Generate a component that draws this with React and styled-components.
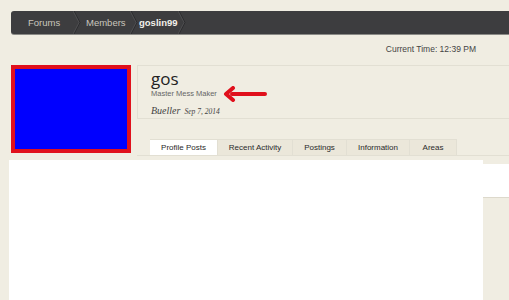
import * as React from "react";
import styled, { createGlobalStyle } from "styled-components";

const color = {
    page: "#f0ede2",
    bar: "#3d3d3f",
    crumb: "#c9c6bd",
    line: "#e2dfd3",
    tab: "#ebe7da",
    red: "#e0101c",
    blue: "#0000ff",
}

const GlobalStyle = createGlobalStyle`
    html, body {
        margin: 0;
        padding: 0;
        background: ${color.page};
        font-family: "Liberation Sans", sans-serif;
        overflow: hidden;
    }
`

const Page = styled.div({
    display: "flex",
    flexDirection: "column",
    width: "509px",
    height: "300px",
    overflow: "hidden",
})

const Breadcrumb = styled.nav({
    display: "flex",
    alignItems: "stretch",
    height: "23px",
    marginTop: "11px",
    marginLeft: "11px",
    background: color.bar,
    borderRadius: "3px 0 0 3px",
    boxShadow: "0 1px 0 #8a8a86",
})

const Crumb = styled.span`
    display: flex;
    align-items: center;
    padding-left: ${(p) => p.$pad}px;
    width: ${(p) => p.$w}px;
    box-sizing: border-box;
    font-size: 9.5px;
    color: ${(p) => (p.$current ? "#f2f0ea" : color.crumb)};
    font-weight: ${(p) => (p.$current ? 700 : 400)};
`

const Chevron = () => (
    <svg width="8" height="23" viewBox="0 0 8 23" style={{ flexShrink: 0 }}>
        <path d="M1 0 L7 11.5 L1 23" fill="none" stroke="#2c2c2e" strokeWidth="1" />
        <path d="M0 0 L6 11.5 L0 23" fill="none" stroke="#4e4e50" strokeWidth="1" />
    </svg>
)

const TimeRow = styled.div({
    display: "flex",
    justifyContent: "flex-end",
    paddingRight: "33px",
    marginTop: "9px",
    height: "12px",
    fontSize: "8.5px",
    color: "#444",
    alignItems: "center",
})

const ProfileRow = styled.div({
    display: "flex",
    marginTop: "10px",
})

const Avatar = styled.div({
    width: "120px",
    height: "88px",
    boxSizing: "border-box",
    marginLeft: "11px",
    border: `4px solid ${color.red}`,
    background: color.blue,
    flexShrink: 0,
})

const Info = styled.div({
    display: "flex",
    flexDirection: "column",
    flex: 1,
    marginLeft: "6px",
})

const Header = styled.div({
    display: "flex",
    flexDirection: "column",
    height: "54px",
    boxSizing: "border-box",
    padding: "3px 0 0 13px",
    borderTop: `1px solid ${color.line}`,
    borderBottom: `1px solid ${color.line}`,
    borderLeft: `1px solid ${color.line}`,
})

const Name = styled.h1({
    margin: 0,
    fontFamily: '"Open Sans", sans-serif',
    fontWeight: 400,
    fontSize: "17px",
    lineHeight: "19px",
    color: "#222",
})

const TitleRow = styled.div({
    display: "flex",
    alignItems: "center",
    gap: "6px",
    height: "11px",
})

const UserTitle = styled.span({
    fontSize: "7.5px",
    color: "#666",
})

const Arrow = () => (
    <svg width="44" height="16" viewBox="0 0 44 16">
        <path d="M42 8 H9" stroke={color.red} strokeWidth="4" strokeLinecap="round" />
        <path d="M10 2 L3 8 L10 14" fill="none" stroke={color.red} strokeWidth="4" strokeLinecap="round" strokeLinejoin="round" />
    </svg>
)

const Blurb = styled.div({
    marginTop: "6px",
    fontFamily: '"Liberation Serif", serif',
    fontStyle: "italic",
    fontSize: "10px",
    color: "#444",
    "& small": {
        fontSize: "7.5px",
        marginLeft: "4px",
    },
})

const Tabs = styled.div({
    display: "flex",
    marginTop: "20px",
    paddingLeft: "13px",
    borderBottom: `1px solid ${color.line}`,
    height: "16px",
})

const Tab = styled.span`
    display: flex;
    align-items: center;
    justify-content: center;
    width: ${(p) => p.$w}px;
    box-sizing: border-box;
    font-size: 8px;
    color: #2a2a2a;
    background: ${(p) => (p.$active ? "#ffffff" : color.tab)};
    border-right: 1px solid ${color.line};
    border-top: 1px solid ${color.line};
`

const ContentRow = styled.div({
    display: "flex",
    marginTop: "4px",
    flex: 1,
})

const Main = styled.div({
    width: "474px",
    marginLeft: "9px",
    background: "#ffffff",
})

const Aside = styled.div({
    display: "flex",
    flexDirection: "column",
    flex: 1,
})

const AsideBox = styled.div({
    height: "33px",
    marginTop: "4px",
    background: "#ffffff",
    borderBottom: "1px solid #ddd9cc",
})

const tabs = [
    ["Profile Posts", 68],
    ["Recent Activity", 75],
    ["Postings", 54],
    ["Information", 63],
    ["Areas", 47],
]

const App = () => {
    return (
        <Page>
            <GlobalStyle />
            <Breadcrumb>
                <Crumb $pad={17} $w={62}>Forums</Crumb>
                <Chevron />
                <Crumb $pad={5} $w={49}>Members</Crumb>
                <Chevron />
                <Crumb $pad={1} $w={40} $current>goslin99</Crumb>
                <Chevron />
            </Breadcrumb>
            <TimeRow>Current Time: 12:39 PM</TimeRow>
            <ProfileRow>
                <Avatar />
                <Info>
                    <Header>
                        <Name>gos</Name>
                        <TitleRow>
                            <UserTitle>Master Mess Maker</UserTitle>
                            <Arrow />
                        </TitleRow>
                        <Blurb>Bueller<small>Sep 7, 2014</small></Blurb>
                    </Header>
                    <Tabs>
                        {tabs.map(([label, w], i) => (
                            <Tab key={label} $w={w} $active={i === 0}>{label}</Tab>
                        ))}
                    </Tabs>
                </Info>
            </ProfileRow>
            <ContentRow>
                <Main />
                <Aside>
                    <AsideBox />
                </Aside>
            </ContentRow>
        </Page>
    )
}

export default App
